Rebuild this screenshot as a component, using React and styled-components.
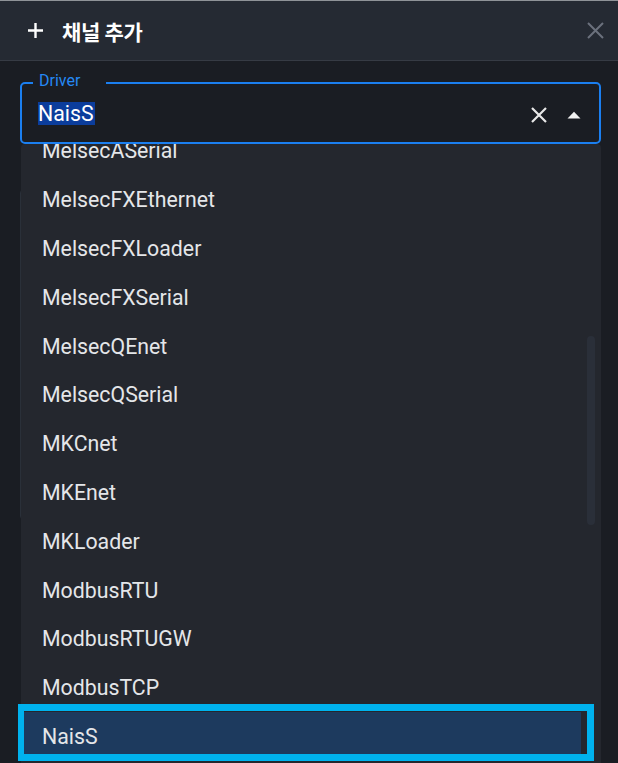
import React from "react";
import styled, { createGlobalStyle } from "styled-components";

const GlobalStyle = createGlobalStyle`
  html, body {
    margin: 0;
    padding: 0;
    background: #1a1d23;
    overflow: hidden;
  }
  body {
    font-family: Roboto, "Noto Sans CJK KR", sans-serif;
    color: #e4e6e9;
  }
  * { box-sizing: border-box; }
`;

const Dialog = styled.div`
  width: 618px;
  height: 763px;
  overflow: hidden;
  background: #1a1d23;
  display: flex;
  flex-direction: column;
`;

const Header = styled.header`
  height: 61px;
  flex: none;
  display: flex;
  align-items: center;
  justify-content: space-between;
  padding: 0 14px 0 27px;
  background: #252a33;
  border-top: 1px solid #8f9398;
  border-bottom: 1px solid #363b44;
`;

const Title = styled.h2`
  margin: 0;
  display: flex;
  align-items: center;
  gap: 18px;
  font-family: "Noto Sans CJK KR", Roboto, sans-serif;
  font-size: 21px;
  font-weight: 700;
  color: #ffffff;
  letter-spacing: -0.3px;
`;

const IconButton = styled.button`
  border: 0;
  padding: 0;
  margin: 0;
  background: transparent;
  display: flex;
  align-items: center;
  justify-content: center;
  color: ${(p) => p.$color || "#e8e8e8"};
  cursor: pointer;
`;

const Body = styled.main`
  flex: 1;
  padding: 10px 17px 0 20px;
  display: flex;
  flex-direction: column;
`;

const Field = styled.div`
  position: relative;
  z-index: 2;
`;

const Outline = styled.fieldset`
  margin: 0;
  min-width: 0;
  padding: 7px 18px 17px 16px;
  border: 2px solid #1b7ff0;
  border-radius: 5px;
`;

const Legend = styled.legend`
  margin-left: -5px;
  padding: 0 26px 5px 6px;
  font-size: 16px;
  color: #2589f5;
  line-height: normal;
`;

const InputRow = styled.div`
  height: 23px;
  display: flex;
  align-items: center;
`;

const Value = styled.div`
  flex: 1;
  display: flex;
  align-items: center;
`;

const Selection = styled.span`
  display: inline-block;
  height: 23px;
  line-height: 23px;
  padding: 0 1px 0 0;
  font-size: 21.3px;
  color: #ffffff;
  background: #0b3d9c;
`;

const Adornments = styled.div`
  display: flex;
  align-items: center;
  gap: 20px;
  margin-top: 3px;
`;

const Listbox = styled.div`
  position: absolute;
  top: 100%;
  left: 1px;
  right: 0;
  height: 640px;
`;

const Scroller = styled.div`
  height: 100%;
  overflow: hidden;
  background: #24272e;
  border-radius: 4px 4px 0 0;
`;

const Options = styled.ul`
  list-style: none;
  margin: -17.5px 20px 0 0;
  padding: 0;
`;

const Option = styled.li`
  height: 48.8px;
  display: flex;
  align-items: center;
  padding-left: 21px;
  font-size: 21.3px;
  color: #e4e6e9;
  background: ${(p) => (p.$selected ? "#1d3a5e" : "transparent")};
`;

const Thumb = styled.div`
  position: absolute;
  left: 566px;
  top: 192px;
  width: 8px;
  height: 189px;
  border-radius: 4px;
  background: #2a2f39;
`;

const Highlight = styled.div`
  position: absolute;
  left: -3px;
  top: 560px;
  width: 576px;
  height: 57px;
  border: 7px solid #00b2ee;
  border-left-width: 6px;
  pointer-events: none;
`;

const Panel = styled.section`
  margin-top: 45px;
  height: 331px;
  border: 1px solid #2a3039;
  border-radius: 4px;
`;

const PlusIcon = () => (
  <svg width="17" height="17" viewBox="0 0 17 17">
    <path d="M8.5 1v15M1 8.5h15" stroke="#fff" strokeWidth="2.4" fill="none" />
  </svg>
);

const CloseIcon = ({ size, width }) => (
  <svg width={size} height={size} viewBox={`0 0 ${size} ${size}`}>
    <path
      d={`M1 1L${size - 1} ${size - 1}M${size - 1} 1L1 ${size - 1}`}
      stroke="currentColor"
      strokeWidth={width}
      fill="none"
    />
  </svg>
);

const ArrowUp = () => (
  <svg width="14" height="8" viewBox="0 0 14 8">
    <path d="M0.5 7.5L7 0.8L13.5 7.5Z" fill="#f2f2f2" />
  </svg>
);

const drivers = [
  "MelsecASerial",
  "MelsecFXEthernet",
  "MelsecFXLoader",
  "MelsecFXSerial",
  "MelsecQEnet",
  "MelsecQSerial",
  "MKCnet",
  "MKEnet",
  "MKLoader",
  "ModbusRTU",
  "ModbusRTUGW",
  "ModbusTCP",
  "NaisS",
];

export default function App() {
  const value = "NaisS";
  return (
    <>
      <GlobalStyle />
      <Dialog>
        <Header>
          <Title>
            <PlusIcon />
            <span>채널 추가</span>
          </Title>
          <IconButton $color="#6b717d" aria-label="닫기">
            <CloseIcon size={17} width={2} />
          </IconButton>
        </Header>
        <Body>
          <Field>
            <Outline>
              <Legend>Driver</Legend>
              <InputRow>
                <Value>
                  <Selection>{value}</Selection>
                </Value>
                <Adornments>
                  <IconButton aria-label="clear">
                    <CloseIcon size={16} width={2.2} />
                  </IconButton>
                  <IconButton aria-label="close list">
                    <ArrowUp />
                  </IconButton>
                </Adornments>
              </InputRow>
            </Outline>
            <Listbox>
              <Scroller>
                <Options>
                  {drivers.map((d) => (
                    <Option key={d} $selected={d === value}>
                      {d}
                    </Option>
                  ))}
                </Options>
              </Scroller>
              <Thumb />
              <Highlight />
            </Listbox>
          </Field>
          <Panel />
        </Body>
      </Dialog>
    </>
  );
}
